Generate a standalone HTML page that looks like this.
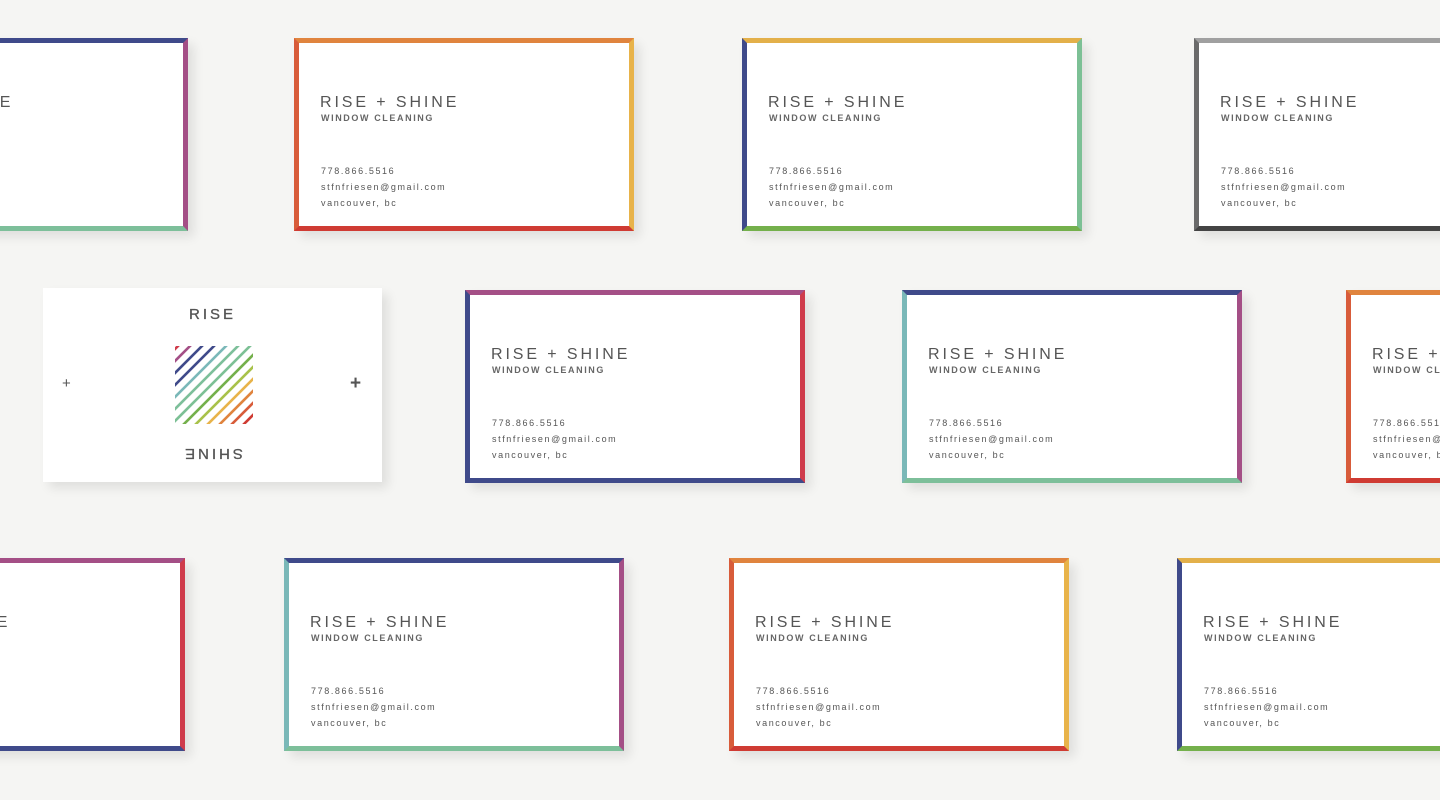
<!DOCTYPE html>
<html><head><meta charset="utf-8"><style>
html,body{margin:0;width:1440px;height:800px;overflow:hidden}
body{background:#f5f5f3;position:relative;font-family:"Liberation Sans",sans-serif;color:#555}
.c{position:absolute;width:340px;height:193px;background:#fff;box-sizing:border-box;border-style:solid;border-width:5px;box-shadow:6px 6px 10px rgba(0,0,0,.09)}
.t{position:absolute;left:21px;top:51px;font-size:16px;letter-spacing:2.9px;white-space:nowrap;color:#555}
.s{position:absolute;left:22px;top:70px;font-size:9px;letter-spacing:1.6px;white-space:nowrap;font-weight:bold;color:#666}
.i{position:absolute;left:22px;top:120px;font-size:9px;letter-spacing:1.6px;line-height:16px;white-space:nowrap;color:#555}
</style></head><body>
<div class="c" style="left:-152px;top:38px;border-color:#3f4a8a #a44f86 #7dbf9a #3f4a8a"><div class="t">RISE + SHINE</div><div class="s">WINDOW CLEANING</div><div class="i">778.866.5516<br>stfnfriesen@gmail.com<br>vancouver, bc</div></div>
<div class="c" style="left:294px;top:38px;border-color:#e0843e #e8b34a #cf3b33 #d85c3a"><div class="t">RISE + SHINE</div><div class="s">WINDOW CLEANING</div><div class="i">778.866.5516<br>stfnfriesen@gmail.com<br>vancouver, bc</div></div>
<div class="c" style="left:742px;top:38px;border-color:#e3b04a #7cc095 #74b04c #3f4a8a"><div class="t">RISE + SHINE</div><div class="s">WINDOW CLEANING</div><div class="i">778.866.5516<br>stfnfriesen@gmail.com<br>vancouver, bc</div></div>
<div class="c" style="left:1194px;top:38px;border-color:#a0a0a0 #888 #444 #6a6a6a"><div class="t">RISE + SHINE</div><div class="s">WINDOW CLEANING</div><div class="i">778.866.5516<br>stfnfriesen@gmail.com<br>vancouver, bc</div></div>

<div style="position:absolute;left:43px;top:288px;width:339px;height:194px;background:#fff;box-shadow:6px 6px 10px rgba(0,0,0,.09)">
<div style="position:absolute;left:0;width:339px;top:18px;text-align:center;font-size:15px;letter-spacing:3px;color:#555;-webkit-text-stroke:.3px #555">RISE</div>
<div style="position:absolute;left:0;width:339px;top:157px;text-align:center;font-size:15px;letter-spacing:3px;color:#555;-webkit-text-stroke:.3px #555;transform:rotate(180deg)">SHINE</div>
<div style="position:absolute;left:19px;top:87px;font-size:15px;color:#555">+</div>
<div style="position:absolute;left:307px;top:85px;font-size:19px;color:#555;font-weight:bold">+</div>
<svg style="position:absolute;left:132px;top:58px" width="78" height="78" viewBox="0 0 78 78"><defs><clipPath id="k"><rect width="78" height="78"/></clipPath></defs><g clip-path="url(#k)" stroke-width="2.6">
<line x1="-1" y1="4" x2="8" y2="-5" stroke="#cf3b4b"/>
<line x1="-1" y1="16" x2="20" y2="-5" stroke="#a44f86"/>
<line x1="-1" y1="28" x2="32" y2="-5" stroke="#3f4a8a"/>
<line x1="-1" y1="40" x2="44" y2="-5" stroke="#3f4a8a"/>
<line x1="-1" y1="52" x2="56" y2="-5" stroke="#7ab8b8"/>
<line x1="-1" y1="64" x2="68" y2="-5" stroke="#7dbf9a"/>
<line x1="-1" y1="76" x2="80" y2="-5" stroke="#7cc095"/>
<line x1="-1" y1="88" x2="92" y2="-5" stroke="#74b04c"/>
<line x1="-1" y1="100" x2="104" y2="-5" stroke="#a8c24a"/>
<line x1="-1" y1="112" x2="116" y2="-5" stroke="#e8b34a"/>
<line x1="-1" y1="124" x2="128" y2="-5" stroke="#e0843e"/>
<line x1="-1" y1="136" x2="140" y2="-5" stroke="#d85c3a"/>
<line x1="-1" y1="148" x2="152" y2="-5" stroke="#cf3b33"/>
</g></svg>
</div>

<div class="c" style="left:465px;top:290px;border-color:#a44f86 #cf3b4b #3f4a8a #3f4a8a"><div class="t">RISE + SHINE</div><div class="s">WINDOW CLEANING</div><div class="i">778.866.5516<br>stfnfriesen@gmail.com<br>vancouver, bc</div></div>
<div class="c" style="left:902px;top:290px;border-color:#3f4a8a #a44f86 #7dbf9a #7ab8b8"><div class="t">RISE + SHINE</div><div class="s">WINDOW CLEANING</div><div class="i">778.866.5516<br>stfnfriesen@gmail.com<br>vancouver, bc</div></div>
<div class="c" style="left:1346px;top:290px;border-color:#e0843e #e8b34a #cf3b33 #d85c3a"><div class="t">RISE + SHINE</div><div class="s">WINDOW CLEANING</div><div class="i">778.866.5516<br>stfnfriesen@gmail.com<br>vancouver, bc</div></div>

<div class="c" style="left:-155px;top:558px;border-color:#a44f86 #cf3b4b #3f4a8a #3f4a8a"><div class="t">RISE + SHINE</div><div class="s">WINDOW CLEANING</div><div class="i">778.866.5516<br>stfnfriesen@gmail.com<br>vancouver, bc</div></div>
<div class="c" style="left:284px;top:558px;border-color:#3f4a8a #a44f86 #7dbf9a #7ab8b8"><div class="t">RISE + SHINE</div><div class="s">WINDOW CLEANING</div><div class="i">778.866.5516<br>stfnfriesen@gmail.com<br>vancouver, bc</div></div>
<div class="c" style="left:729px;top:558px;border-color:#e0843e #e8b34a #cf3b33 #d85c3a"><div class="t">RISE + SHINE</div><div class="s">WINDOW CLEANING</div><div class="i">778.866.5516<br>stfnfriesen@gmail.com<br>vancouver, bc</div></div>
<div class="c" style="left:1177px;top:558px;border-color:#e3b04a #7cc095 #74b04c #3f4a8a"><div class="t">RISE + SHINE</div><div class="s">WINDOW CLEANING</div><div class="i">778.866.5516<br>stfnfriesen@gmail.com<br>vancouver, bc</div></div>
</body></html>
